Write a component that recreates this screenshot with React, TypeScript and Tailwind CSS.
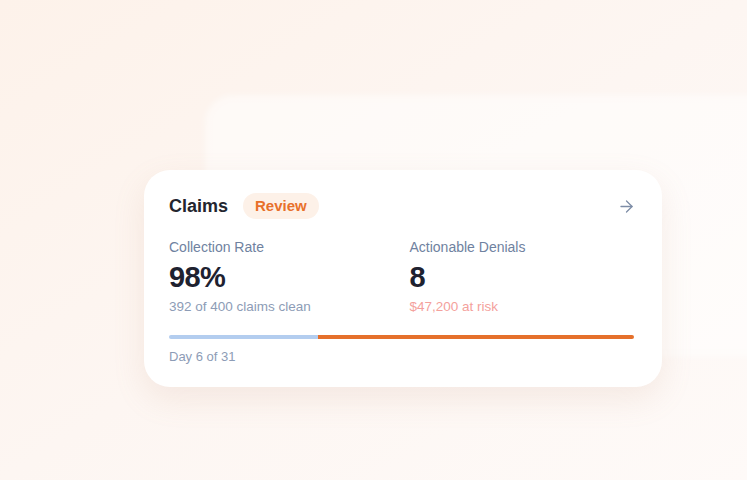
import { ArrowRight } from "lucide-react";

const FONT = { fontFamily: '"Liberation Sans", Arial, sans-serif' };

function Metric({
  label,
  value,
  note,
  noteClass,
}: {
  label: string;
  value: string;
  note: string;
  noteClass: string;
}) {
  return (
    <div>
      <div className="text-[14px] leading-5 text-[#6f82a0]">{label}</div>
      <div className="text-[29px] leading-9 font-bold tracking-[-0.02em] text-[#1e2230] mt-0.5">
        {value}
      </div>
      <div className={`text-[13.5px] leading-5 mt-0.5 ${noteClass}`}>{note}</div>
    </div>
  );
}

export default function App() {
  return (
    <div
      className="relative w-[747px] h-[480px] overflow-hidden bg-gradient-to-br from-[#fdf2ea] via-[#fdf6f2] to-[#fefaf8]"
      style={FONT}
    >
      {/* soft panel behind the card */}
      <div className="absolute left-[205px] top-[95px] w-[580px] h-[262px] rounded-[28px] bg-white/50 blur-[3px]" />

      <div className="relative pt-[170px] pl-[144px]">
        <div className="w-[518px] h-[217px] rounded-[26px] bg-white pl-[25px] pr-[28px] pt-[23px] shadow-[0_12px_32px_rgba(190,140,110,0.14)]">
          <div className="flex items-center h-[26px]">
            <span className="text-[18px] font-bold text-[#23252e]">Claims</span>
            <span className="ml-[15px] h-[26px] px-3 rounded-full bg-[#fdf1e8] text-[15px] font-bold text-[#e8702a] flex items-center">
              Review
            </span>
            <ArrowRight className="ml-auto -mr-[2px] text-[#7d8ca6]" size={19} strokeWidth={1.6} />
          </div>

          <div className="grid grid-cols-2 gap-4 mt-[18px]">
            <Metric
              label="Collection Rate"
              value="98%"
              note="392 of 400 claims clean"
              noteClass="text-[#8d9cb6]"
            />
            <Metric
              label="Actionable Denials"
              value="8"
              note="$47,200 at risk"
              noteClass="text-[#f4a19c]"
            />
          </div>

          <div className="flex h-[4px] mt-[18px] rounded-full overflow-hidden">
            <div className="w-[149px] bg-[#b3cdef]" />
            <div className="flex-1 bg-[#e5702b]" />
          </div>

          <div className="text-[13px] leading-5 mt-[8px] text-[#8d9cb6]">Day 6 of 31</div>
        </div>
      </div>
    </div>
  );
}
